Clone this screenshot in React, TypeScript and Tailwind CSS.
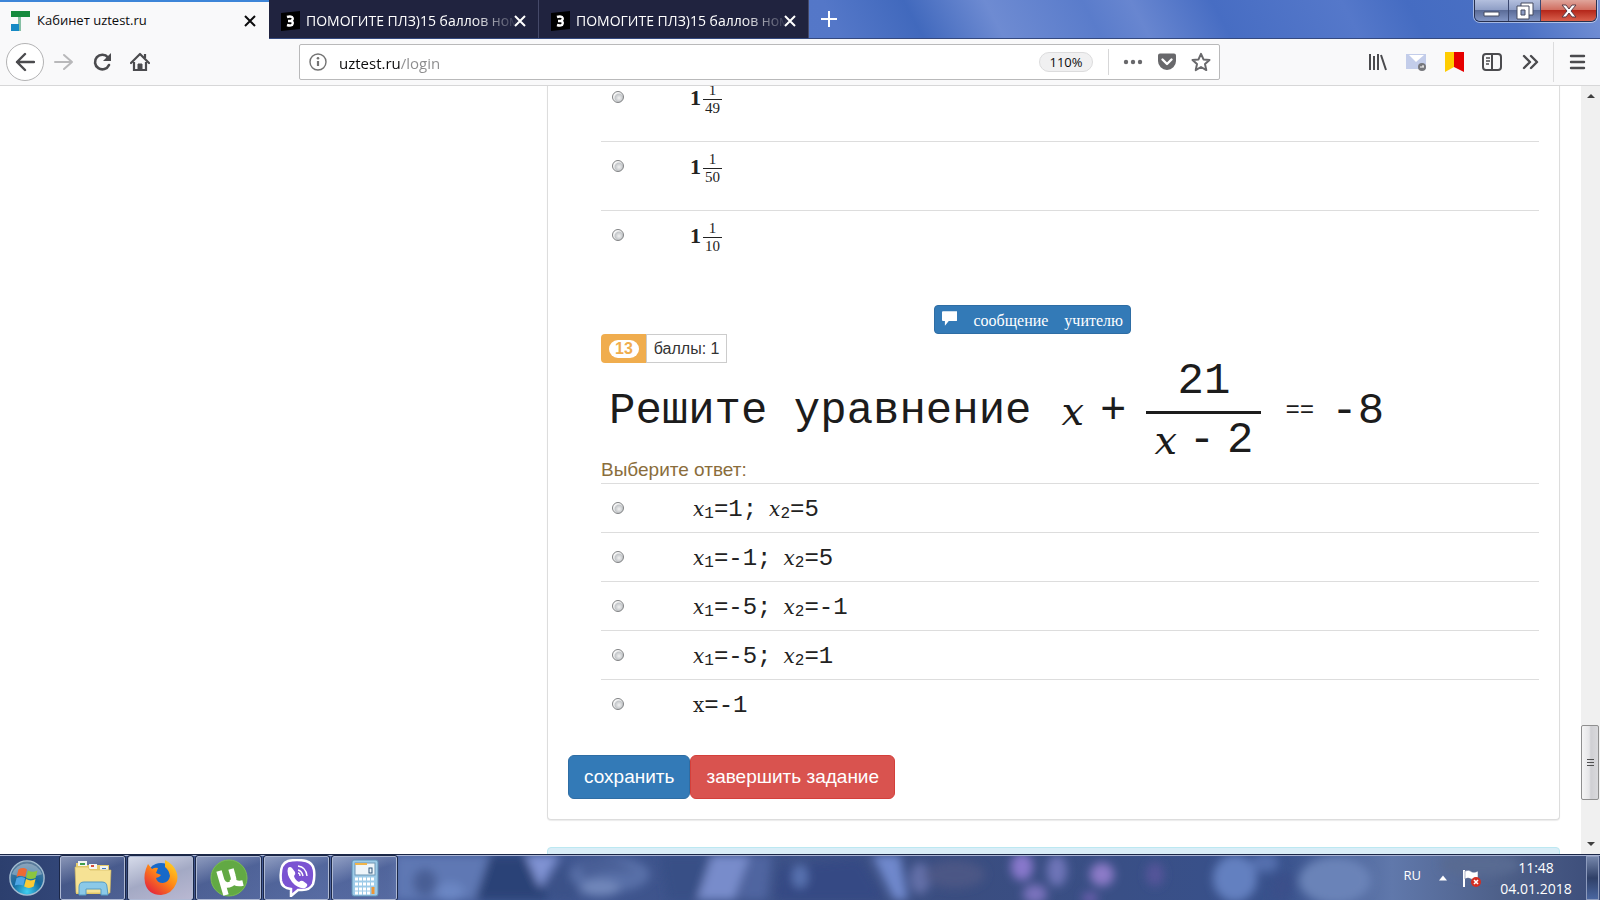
import type { ReactNode } from 'react';

const OPTIONS_12 = ['49', '50', '10'];

const OPTIONS_13 = [
  ['1', '5'],
  ['-1', '5'],
  ['-5', '-1'],
  ['-5', '1'],
];

const CloseIcon = () => (
  <svg viewBox="0 0 12 12" className="w-3 h-3 fill-none stroke-current stroke-2">
    <path d="M1 1l10 10M11 1L1 11" />
  </svg>
);

const ZnanijaIcon = () => (
  <svg viewBox="0 0 20 20" className="w-5 h-5 shrink-0">
    <path d="M1 2L20 0V18L1 20z" fill="#000" />
    <path
      d="M7 6q3-1 5 0 2 2-1 4 3 1 1 4-2 1-5 0M8 10h3"
      fill="none"
      stroke="#fff"
      strokeWidth="2.4"
    />
  </svg>
);

const InactiveTab = () => (
  <div className="flex items-center w-[270px] h-full pt-[3px] pl-[11px] pr-3 bg-[#20233f] border-r border-[#454969] text-white">
    <button role="tab" className="flex items-center gap-[6px] flex-1 min-w-0">
      <ZnanijaIcon />
      <span className="flex-1 text-left text-sm whitespace-nowrap [mask-image:linear-gradient(90deg,#000_78%,transparent)]">
        ПОМОГИТЕ ПЛЗ)15 баллов ном
      </span>
    </button>
    <button aria-label="Закрыть вкладку">
      <CloseIcon />
    </button>
  </div>
);

const TitleBar = () => (
  <div className="flex h-[39px] shrink-0 bg-[linear-gradient(62deg,#5a7ecb_0%,#5477c8_52%,#4169bd_57%,#6e8bd2_62%,#5a7ccb_68%,#6886d0_71%,#476dc3_76%,#5578ca_84%,#456cc2_88%,#4a70c4_94%,#7692d6_100%)] border-b border-[#34497f]">
    <div className="flex items-center w-[269px] h-[39px] pl-[10px] pr-[13px] bg-[#f9f9fa] border-t-2 border-[#3d85d8]">
      <button role="tab" aria-selected="true" className="flex items-center gap-[7px] flex-1">
        <svg viewBox="0 0 20 20" className="w-5 h-5">
          <path d="M1 0h19v6H1z" fill="#168a3e" />
          <path d="M8 6h3v14H8z" fill="#86bfa4" />
          <path d="M1 13h8v7H1z" fill="#1689c4" />
        </svg>
        <span className="text-[13px]">Кабинет uztest.ru</span>
      </button>
      <button aria-label="Закрыть вкладку">
        <CloseIcon />
      </button>
    </div>
    <InactiveTab />
    <InactiveTab />
    <button aria-label="Новая вкладка" className="px-3 text-white">
      <svg viewBox="0 0 16 16" className="w-4 h-4 fill-none stroke-current stroke-2">
        <path d="M8 0v16M0 8h16" />
      </svg>
    </button>
    <div className="flex ml-auto mr-[3px] h-[22px] rounded-b-md overflow-hidden border border-t-0 border-[#27304f] shadow-[0_0_0_1px_#ffffff80] text-white">
      <button
        aria-label="Свернуть"
        className="flex items-center justify-center w-[34px] border-r border-[#3b4870] bg-[linear-gradient(#b3bfde_0%,#8c9cc4_50%,#5b6c98_50%,#8396c4_100%)]"
      >
        <svg viewBox="0 0 18 18" className="w-[18px]">
          <path d="M1 10h15v4H1z" fill="#fff" stroke="#444b60" />
        </svg>
      </button>
      <button
        aria-label="Восстановить"
        className="flex items-center justify-center w-[32px] border-r border-[#3b4870] bg-[linear-gradient(#b3bfde_0%,#8c9cc4_50%,#5b6c98_50%,#8396c4_100%)]"
      >
        <svg viewBox="0 0 18 18" className="w-[18px]">
          <path d="M5 1h12v12H5z" fill="#fff" stroke="#444b60" />
          <path d="M1 4h12v13H1z" fill="#fff" stroke="#444b60" />
          <path d="M5 8h4v5H5z" fill="#8c9cc4" stroke="#444b60" />
        </svg>
      </button>
      <button
        aria-label="Закрыть"
        className="flex items-center justify-center w-[55px] bg-[linear-gradient(#e0a59b_0%,#cf6a5c_50%,#b5281b_50%,#d9604c_100%)]"
      >
        <svg viewBox="0 0 16 16" className="w-4">
          <path
            d="M1 2h4l3 4 3-4h4l-5 6 5 6h-4l-3-4-3 4H1l5-6z"
            fill="#fff"
            stroke="#5a3b45"
          />
        </svg>
      </button>
    </div>
  </div>
);

const ToolButton = ({ label, children }: { label: string; children: ReactNode }) => (
  <button
    aria-label={label}
    className="flex items-center justify-center w-[38px] h-[38px] shrink-0"
  >
    {children}
  </button>
);

const Toolbar = () => (
  <div className="flex items-center h-[47px] shrink-0 pl-[6px] pr-1 bg-[#f9f9fa] border-b border-[#d7d7d8] text-[#4b4b4e]">
    <button
      aria-label="Назад"
      className="flex items-center justify-center w-[38px] h-[38px] mr-px shrink-0 rounded-full border border-[#b3b3b4] bg-white"
    >
      <svg viewBox="0 0 20 20" className="w-5 h-5 fill-none stroke-current stroke-[2.4]">
        <path d="M19 10H2M10 2L2 10l8 8" strokeLinecap="round" strokeLinejoin="round" />
      </svg>
    </button>
    <ToolButton label="Вперёд">
      <svg viewBox="0 0 20 20" className="w-5 h-5 fill-none stroke-[#b8b8ba] stroke-2">
        <path d="M1 10h17M10 3l8 7-8 7" strokeLinecap="round" strokeLinejoin="round" />
      </svg>
    </ToolButton>
    <ToolButton label="Обновить">
      <svg viewBox="0 0 20 20" className="w-5 h-5 fill-none stroke-current stroke-[2.6]">
        <path d="M16 5.500A7.300 7.300 0 1 0 17 13" strokeLinecap="round" />
        <path d="M19 1v8h-8z" fill="currentColor" stroke="none" />
      </svg>
    </ToolButton>
    <ToolButton label="Домой">
      <svg viewBox="0 0 20 20" className="w-5 h-5 fill-none stroke-current stroke-[2.2]">
        <path d="M1 11l9-9 9 9" strokeLinecap="round" strokeLinejoin="round" />
        <path d="M4 10v8h12v-8M15 2v4" />
        <path d="M8 12h4v6H8z" fill="currentColor" strokeWidth="1" />
      </svg>
    </ToolButton>

    <div className="w-[140px]" />
    <div className="flex items-center flex-1 h-9 pl-[9px] pr-1 bg-white border border-[#b9b9ba] rounded-xs">
      <button aria-label="Сведения о сайте">
        <svg viewBox="0 0 18 18" className="w-[18px] h-[18px] fill-none stroke-[#737373] stroke-[1.4]">
          <circle cx="9" cy="9" r="8" />
          <path d="M9 8v5" strokeWidth="2.200" />
          <circle cx="9" cy="5.200" r="1.300" fill="#737373" stroke="none" />
        </svg>
      </button>
      <input
        type="text"
        aria-label="Адрес"
        defaultValue="uztest.ru/login"
        className="flex-1 ml-3 pt-[2px] outline-none text-[15px] bg-[linear-gradient(90deg,#0c0c0d_61px,#8b8b8c_61px)] bg-clip-text text-transparent"
      />
      <button className="w-[54px] h-5 rounded-full bg-[#f0f0f1] border border-[#dcdcdd] text-[13px] leading-[18px] text-[#0c0c0d]">
        110%
      </button>
      <div className="w-px h-[26px] ml-[15px] mr-[14px] bg-[#d7d7d8]" />
      <button aria-label="Действия на странице" className="text-[#68686b]">
        <svg viewBox="0 0 20 20" className="w-5 h-5 fill-current">
          <circle cx="3" cy="10" r="2.200" />
          <circle cx="10" cy="10" r="2.200" />
          <circle cx="17" cy="10" r="2.200" />
        </svg>
      </button>
      <button aria-label="Сохранить в Pocket" className="ml-[14px] text-[#68686b]">
        <svg viewBox="0 0 20 20" className="w-5 h-5">
          <path d="M3 1.500h14a2 2 0 0 1 2 2V9a9 9 0 0 1-18 0V3.500a2 2 0 0 1 2-2z" fill="currentColor" />
          <path d="M5.500 7.500L10 12l4.500-4.500" fill="none" stroke="#fff" strokeWidth="2.400" strokeLinecap="round" strokeLinejoin="round" />
        </svg>
      </button>
      <button aria-label="Добавить в закладки" className="ml-[14px] mr-1 text-[#68686b]">
        <svg viewBox="0 0 20 20" className="w-5 h-5 fill-none stroke-current stroke-2">
          <path d="M10 1.800l2.500 5.600 6 .6-4.500 4.100 1.300 6-5.300-3.100-5.300 3.100 1.300-6L1.500 8l6-.6z" strokeLinejoin="round" />
        </svg>
      </button>
    </div>
    <div className="w-[139px]" />

    <ToolButton label="Библиотека">
      <svg viewBox="0 0 20 20" className="w-5 h-5 fill-none stroke-current stroke-2">
        <path d="M2 2v16M6 4v14M10 2v16M13 3l5 15" />
      </svg>
    </ToolButton>
    <ToolButton label="Почта">
      <svg viewBox="0 0 20 20" className="w-5 h-5">
        <path d="M0 2h20v15H0z" fill="#c3cdea" />
        <path d="M3 3l7 7 8-7z" fill="#fff" />
        <circle cx="16" cy="15" r="4" fill="#76777c" />
        <path d="M14 15h4M17 13v2" stroke="#fff" fill="none" />
      </svg>
    </ToolButton>
    <ToolButton label="Закладки">
      <svg viewBox="0 0 20 20" className="w-5 h-5">
        <path d="M1 0h9v15l-9 5z" fill="#fc0" />
        <path d="M10 0h10v20l-10-5z" fill="#e60000" />
      </svg>
    </ToolButton>
    <ToolButton label="Боковая панель">
      <svg viewBox="0 0 20 20" className="w-5 h-5 fill-none stroke-current stroke-2">
        <rect x="1" y="2" width="18" height="16" rx="3" />
        <path d="M10 2v16" />
        <path d="M4 6h4M4 9h4M4 12h3" strokeWidth="1.300" />
      </svg>
    </ToolButton>
    <ToolButton label="Другие инструменты">
      <svg viewBox="0 0 20 20" className="w-5 h-5 fill-none stroke-current stroke-[2.4]">
        <path d="M4 4l6 6-6 6M11 4l6 6-6 6" strokeLinecap="round" strokeLinejoin="round" />
      </svg>
    </ToolButton>
    <div className="w-px h-10 ml-1 mr-1 bg-[#dcdcdd]" />
    <ToolButton label="Меню">
      <svg viewBox="0 0 20 20" className="w-5 h-5 fill-none stroke-current stroke-[2.4]">
        <path d="M4 4h13M4 10h13M4 16h13" strokeLinecap="round" />
      </svg>
    </ToolButton>
  </div>
);

const Radio = ({ id, name }: { id: string; name: string }) => (
  <input
    type="radio"
    id={id}
    name={name}
    className="appearance-none shrink-0 w-3 h-3 rounded-full border border-[#7f8183] bg-[radial-gradient(circle_at_60%_60%,#f2f2f2_0%,#c4c7ca_45%,#f8f8f8_62%)]"
  />
);

const MathX = ({ sub }: { sub?: string }) => (
  <>
    <span className="font-['DejaVu_Serif',serif] italic text-xl">x</span>
    <span className="text-base relative top-[2px]">{sub}</span>
  </>
);

const Message = () => (
  <button className="flex items-center h-[29px] w-[197px] ml-[333px] px-[7px] rounded-sm bg-[#337ab7] border border-[#2e6da4] text-white font-['Liberation_Serif',serif] text-base whitespace-nowrap">
    <svg viewBox="0 0 16 16" className="w-4 h-4 mb-1 fill-current">
      <path d="M1 1h14a1 1 0 0 1 1 1v8a1 1 0 0 1-1 1H7l-4 5v-5H1a1 1 0 0 1-1-1V2a1 1 0 0 1 1-1z" />
    </svg>
    <span className="ml-4 pt-[2px]">сообщение</span>
    <span className="ml-4 pt-[2px]">учителю</span>
  </button>
);

const Equation = () => (
  <div className="flex items-start h-[93px] pl-2 font-['Liberation_Mono',monospace] text-[44px] leading-9 text-[#1c1c1c] whitespace-nowrap">
    <span className="mt-[30px]">Решите уравнение</span>
    <span className="mt-[30px] ml-[30px] font-['DejaVu_Serif',serif] italic text-[40px]">x</span>
    <span className="mt-[30px] ml-4">+</span>
    <span className="ml-5 w-[115px] text-center">
      <span className="block pb-3 border-b-3 border-[#1c1c1c]">21</span>
      <span className="flex justify-between pt-2 px-2">
        <span className="font-['DejaVu_Serif',serif] italic text-[40px]">x</span>
        <span>-</span>
        <span>2</span>
      </span>
    </span>
    <span className="mt-[30px] ml-6 text-2xl leading-9">==</span>
    <span className="mt-[30px] ml-[17px]">-8</span>
  </div>
);

const QuizPanel = () => (
  <main className="px-5 pb-5 rounded-b-sm bg-white border border-t-0 border-[#ddd] shadow-[0_1px_1px_rgba(0,0,0,0.08)]">
    <div className="ml-[33px]">
      {/* Tail of question 12, scrolled half out of view */}
      <div className="-mt-[14px]">
        {OPTIONS_12.map((den) => (
          <div key={den} className="flex items-start h-[69px] pl-[11px] border-t border-[#ddd]">
            <div className="flex items-center h-12">
              <Radio id={`q12-${den}`} name="q12" />
            </div>
            <label
              htmlFor={`q12-${den}`}
              className="flex items-center h-[53px] ml-[66px] font-['Liberation_Serif',serif] text-[#222]"
            >
              <span className="pb-[5px] text-[22px] font-semibold">1</span>
              <span className="flex flex-col ml-[2px] w-[19px] text-center text-[15px] leading-[17px]">
                <span className="border-b border-[#222]">1</span>
                <span>{den}</span>
              </span>
            </label>
          </div>
        ))}
      </div>

      <div className="mt-[26px]">
        <Message />
      </div>
      <div className="flex h-[29px] text-base leading-[27px] text-[#333]">
        <span className="flex items-center pt-px pl-2 pr-[7px] rounded-l-sm bg-[#f0ad4e]">
          <span className="px-[6px] rounded-full bg-white text-[#f0ad4e] text-base leading-[18px] font-bold">
            13
          </span>
        </span>
        <span className="px-[7px] border border-[#ccc]">баллы: 1</span>
      </div>

      <Equation />

      <fieldset>
        <legend className="h-[27px] text-[19px] leading-[27px] text-[#8a6d3b]">Выберите ответ:</legend>
        {OPTIONS_13.map(([first, second], i) => (
          <div key={i} className="flex items-center h-[49px] pl-[11px] border-t border-[#ddd]">
            <Radio id={`q13-${i}`} name="q13" />
            <label
              htmlFor={`q13-${i}`}
              className="flex items-baseline pt-1 ml-[69px] font-['Liberation_Mono',monospace] text-2xl text-[#222]"
            >
              <MathX sub="1" />={first};
              <span className="ml-3">
                <MathX sub="2" />={second}
              </span>
            </label>
          </div>
        ))}
        <div className="flex items-center h-[49px] pl-[11px] border-t border-[#ddd]">
          <Radio id="q13-4" name="q13" />
          <label
            htmlFor="q13-4"
            className="flex items-baseline pt-1 ml-[69px] font-['Liberation_Mono',monospace] text-2xl text-[#222]"
          >
            <span className="font-['DejaVu_Serif',serif] text-xl">x</span>=-1
          </label>
        </div>
      </fieldset>
    </div>

    <div className="flex mt-[27px] text-[19px] text-white">
      <button className="h-11 px-[15px] rounded-md bg-[#337ab7] border border-[#2e6da4]">
        сохранить
      </button>
      <button className="h-11 px-[15px] rounded-md bg-[#d9534f] border border-[#d43f3a]">
        завершить задание
      </button>
    </div>
  </main>
);

const Scrollbar = () => (
  <div className="flex flex-col items-center w-[19px] shrink-0 bg-[#f0f0f0]">
    <svg viewBox="0 0 8 4" className="w-2 h-1 mt-2 fill-[#404040]">
      <path d="M4 0l4 4H0z" />
    </svg>
    <div className="flex flex-col items-center justify-center gap-[2px] self-start w-[18px] h-[75px] mt-auto rounded-xs border border-[#8f8f8f] bg-[linear-gradient(90deg,#f5f5f5,#e6e6e8_45%,#cfcfd3_55%,#d9d9dc)]">
      <div className="w-[7px] h-px bg-[#505050]" />
      <div className="w-[7px] h-px bg-[#505050]" />
      <div className="w-[7px] h-px bg-[#505050]" />
    </div>
    <svg viewBox="0 0 8 4" className="w-2 h-1 mt-[42px] mb-2 fill-[#404040]">
      <path d="M0 0h8L4 4z" />
    </svg>
  </div>
);

const TaskButton = ({ label, active, children }: { label: string; active?: boolean; children: ReactNode }) => (
  <button
    aria-label={label}
    className={`flex items-center justify-center w-[65px] h-11 rounded-xs border border-[#aeb9d4] outline outline-[#1b2747] ${
      active
        ? 'bg-[linear-gradient(160deg,#d6dbea,#a3a9c4_50%,#b9b8d2)]'
        : 'bg-[linear-gradient(160deg,#b4bdd6aa,#5c6c9c77_45%,#6878a877)]'
    }`}
  >
    {children}
  </button>
);

const Wallpaper = () => (
  <svg viewBox="0 0 1600 46" preserveAspectRatio="none" className="absolute inset-0 w-full h-full">
    <defs>
      <filter id="soft" x="-20%" y="-50%" width="140%" height="200%">
        <feGaussianBlur stdDeviation="5" />
      </filter>
      <linearGradient id="base">
        <stop offset="0" stopColor="#2c3f6e" />
        <stop offset="0.2" stopColor="#4a629f" />
        <stop offset="0.35" stopColor="#3f5690" />
        <stop offset="0.6" stopColor="#3a4d80" />
        <stop offset="0.8" stopColor="#38518c" />
        <stop offset="0.87" stopColor="#6078ab" />
        <stop offset="0.94" stopColor="#4d5f88" />
        <stop offset="1" stopColor="#3c4d7a" />
      </linearGradient>
    </defs>
    <rect width="1600" height="46" fill="url(#base)" />
    <g filter="url(#soft)">
      <path d="M395 0h95l-15 46h-80z" fill="#5f78b4" />
      <ellipse cx="425" cy="28" rx="12" ry="14" fill="#4a5f95" />
      <ellipse cx="450" cy="38" rx="14" ry="10" fill="#6c87c4" />
      <path d="M490 0h40l20 46h-75z" fill="#2b4277" />
      <path d="M525 0h35l-20 34z" fill="#8093d3" />
      <path d="M545 30l20-24 15 40h-25z" fill="#3b5188" />
      <ellipse cx="610" cy="20" rx="40" ry="18" fill="#5870a8" />
      <ellipse cx="600" cy="34" rx="20" ry="8" fill="#7288bb" />
      <path d="M575 6q40-10 60 14-20-8-50 4z" fill="#495f96" />
      <path d="M660 0h50l-12 46h-30z" fill="#394f86" />
      <path d="M712 0h38l-15 46h-38z" fill="#788ccb" />
      <path d="M750 0h22l-5 46h-28z" fill="#5065a0" />
      <path d="M780 12l80-8 25 42H775z" fill="#344984" />
      <ellipse cx="800" cy="22" rx="8" ry="12" fill="#5872b0" />
      <path d="M872 0h28l8 46h-14z" fill="#7088cc" />
      <ellipse cx="920" cy="24" rx="10" ry="16" fill="#636fa8" />
      <ellipse cx="955" cy="20" rx="30" ry="14" fill="#4c5685" />
      <ellipse cx="1022" cy="12" rx="11" ry="14" fill="#8878cc" />
      <ellipse cx="1057" cy="16" rx="10" ry="16" fill="#6e74b8" />
      <ellipse cx="1102" cy="20" rx="12" ry="12" fill="#8c7ac8" />
      <ellipse cx="1035" cy="40" rx="12" ry="10" fill="#7a72bd" />
      <ellipse cx="1090" cy="44" rx="8" ry="6" fill="#6c5fae" />
      <ellipse cx="1155" cy="20" rx="9" ry="12" fill="#54549a" />
      <ellipse cx="1235" cy="24" rx="22" ry="24" fill="#6480c0" />
      <ellipse cx="1265" cy="8" rx="14" ry="10" fill="#5570ae" />
      <path d="M1275 20h20l-5 26h-20z" fill="#3a508a" />
      <ellipse cx="1335" cy="26" rx="36" ry="24" fill="#6a83b8" />
      <ellipse cx="1480" cy="10" rx="40" ry="12" fill="#586a92" />
    </g>
  </svg>
);

const Taskbar = () => (
  <footer className="relative flex items-center h-[46px] shrink-0 border-t border-[#1b2747] text-white">
    <Wallpaper />
    <div className="relative flex items-center gap-[3px] w-full h-full border-t border-[#a9b4d3]">
      <button aria-label="Пуск" className="w-[57px] pl-2">
        <svg viewBox="0 0 40 40" className="w-[38px] h-[38px]">
          <defs>
            <radialGradient id="orb" cx="50%" cy="90%" r="85%">
              <stop offset="0" stopColor="#3fd0f2" />
              <stop offset="0.5" stopColor="#14699f" />
              <stop offset="1" stopColor="#5e7d9c" />
            </radialGradient>
          </defs>
          <circle cx="20" cy="20" r="18" fill="url(#orb)" stroke="#a3bcd1" strokeWidth="1.500" />
          <path d="M4 16A17 17 0 0 1 36 16Q20 22 4 16z" fill="#fff" opacity=".3" />
          <path d="M11 11q5-3 9 0l-2 8q-5-3-9 0z" fill="#ee6a34" />
          <path d="M21 12q5 3 10 0l-2 8q-5 2-10 0z" fill="#8cc63f" />
          <path d="M9 20q5-2 9 0l-2 8q-5-2-9 0z" fill="#4ea6e6" />
          <path d="M19 21q5 3 10 0l-2 8q-5 3-10 0z" fill="#fccb35" />
        </svg>
      </button>
      <TaskButton label="Проводник">
        <svg viewBox="0 0 38 38" className="w-[38px] h-[38px]">
          <path d="M2 4h9l2 2h22v29H2z" fill="#e7cd6d" />
          <path d="M4 2h9v5H4zM15 5h8v5h-8zM26 7h8v5h-8z" fill="#f4f6f2" />
          <path d="M6 4h5v2H6z" fill="#3f9e4d" />
          <path d="M17 6h3v2h-3z" fill="#d84c37" />
          <path d="M28 9h4v1h-4z" fill="#3f79c5" />
          <path d="M1 8h13l2 3h21l-1 23H2z" fill="#f6e294" stroke="#d4b85c" strokeWidth=".6" />
          <path d="M5 28q0-5 5-5h18q5 0 5 5l1 8h-7v-6H12v6H5z" fill="#8bc9e8" stroke="#579bc4" />
        </svg>
      </TaskButton>
      <TaskButton label="Firefox" active>
        <svg viewBox="0 0 38 38" className="w-[38px] h-[38px]">
          <defs>
            <linearGradient id="fox" x1="1" y1="0" x2="0.2" y2="1">
              <stop offset="0" stopColor="#ffe226" />
              <stop offset="0.5" stopColor="#ff8a16" />
              <stop offset="1" stopColor="#e3213e" />
            </linearGradient>
          </defs>
          <circle cx="19" cy="18" r="14" fill="#1769c9" />
          <path
            d="M6 5l4 5q3-2 6-1l-2 5 5 2q-2 3-5 3 1 5 7 5 6-1 7-7-1-6-5-9V1q8 4 11 11 3 6 0 13-4 10-15 11-13 0-16-12Q1 15 6 5z"
            fill="url(#fox)"
          />
        </svg>
      </TaskButton>
      <TaskButton label="µTorrent">
        <svg viewBox="0 0 38 38" className="w-[38px] h-[38px]">
          <circle cx="19" cy="19" r="18" fill="#62a944" stroke="#79bd52" />
          <path
            d="M9 12l7 24M12 22q3 6 9 3 4-2 2-8l-2-7M22 20q3 6 11 4"
            fill="none"
            stroke="#fff"
            strokeWidth="5.500"
          />
        </svg>
      </TaskButton>
      <TaskButton label="Viber">
        <svg viewBox="0 0 38 38" className="w-[38px] h-[38px]">
          <path
            d="M10 2q9-2 18 0 7 2 8 9 1 8-1 14-3 6-11 6h-4l-7 6v-7Q4 29 3 22 1 5 10 2z"
            fill="#7b53d2"
            stroke="#fff"
            strokeWidth="2.500"
          />
          <path
            d="M10 9q2-2 4 0l3 4q1 2-1 4 1 4 5 6 2-2 4-1l4 3q1 2-2 4-7 1-13-6-6-8-4-14z"
            fill="#fff"
          />
          <path d="M20 7q8 1 9 10M20 11q4 1 5 6M20 14q2 0 2 3" fill="none" stroke="#fff" strokeWidth="1.400" />
        </svg>
      </TaskButton>
      <TaskButton label="Калькулятор">
        <svg viewBox="0 0 28 38" className="w-[28px] h-[38px]">
          <rect x="1" y="1" width="26" height="36" rx="2" fill="#9dcbe8" stroke="#5f8fb4" />
          <rect x="4" y="4" width="20" height="12" fill="#eef5fa" stroke="#6f96b3" />
          <path d="M4 5h12" stroke="#f0b44a" strokeWidth="2" />
          <rect x="18" y="9" width="3" height="5" fill="none" stroke="#31587c" />
          <path d="M4 20h20M4 25h20M4 30h15M4 34h15" stroke="#fff" strokeWidth="3" strokeDasharray="3 1" />
          <path d="M22 28v7" stroke="#ee9636" strokeWidth="3" />
        </svg>
      </TaskButton>

      <div className="flex items-center ml-auto">
        <span className="pb-1 text-[13px]">RU</span>
        <button aria-label="Скрытые значки" className="ml-[18px]">
          <svg viewBox="0 0 10 6" className="w-2 h-[6px] fill-white">
            <path d="M5 0l5 6H0z" />
          </svg>
        </button>
        <button aria-label="Центр поддержки" className="ml-4">
          <svg viewBox="0 0 18 18" className="w-[18px] h-[18px]">
            <path d="M1 1v17" stroke="#fff" strokeWidth="2" />
            <path d="M2 2q4-2 7 1 3 1 6-1v8q-4 2-7 0-3-2-6 0z" fill="#fff" stroke="#59658a" strokeWidth=".5" />
            <circle cx="13" cy="13" r="5" fill="#d42e22" />
            <path d="M11 11l4 4M15 11l-4 4" stroke="#fff" strokeWidth="1.600" />
          </svg>
        </button>
        <div className="ml-[18px] w-[74px] text-sm leading-[21px] text-center whitespace-nowrap">
          <div>11:48</div>
          <div>04.01.2018</div>
        </div>
        <button
          aria-label="Свернуть все окна"
          className="w-[13px] h-11 ml-[13px] mr-px border border-[#8d9bbd] bg-[linear-gradient(#7586ab,#2f4068_50%,#4a66a0)]"
        />
      </div>
    </div>
  </footer>
);

export default function App() {
  return (
    <div className="flex flex-col h-screen overflow-hidden bg-white font-['Open_Sans','Noto_Sans',sans-serif] text-[#0c0c0d]">
      <TitleBar />
      <Toolbar />
      <div className="flex flex-1 min-h-0">
        <div className="flex-1 pl-[547px] pr-[21px] overflow-hidden font-['Liberation_Sans',sans-serif]">
          <QuizPanel />
          <div className="h-20 mt-[27px] rounded-sm bg-[#d9edf7] border border-[#bce8f1]" />
        </div>
        <Scrollbar />
      </div>
      <Taskbar />
    </div>
  );
}
